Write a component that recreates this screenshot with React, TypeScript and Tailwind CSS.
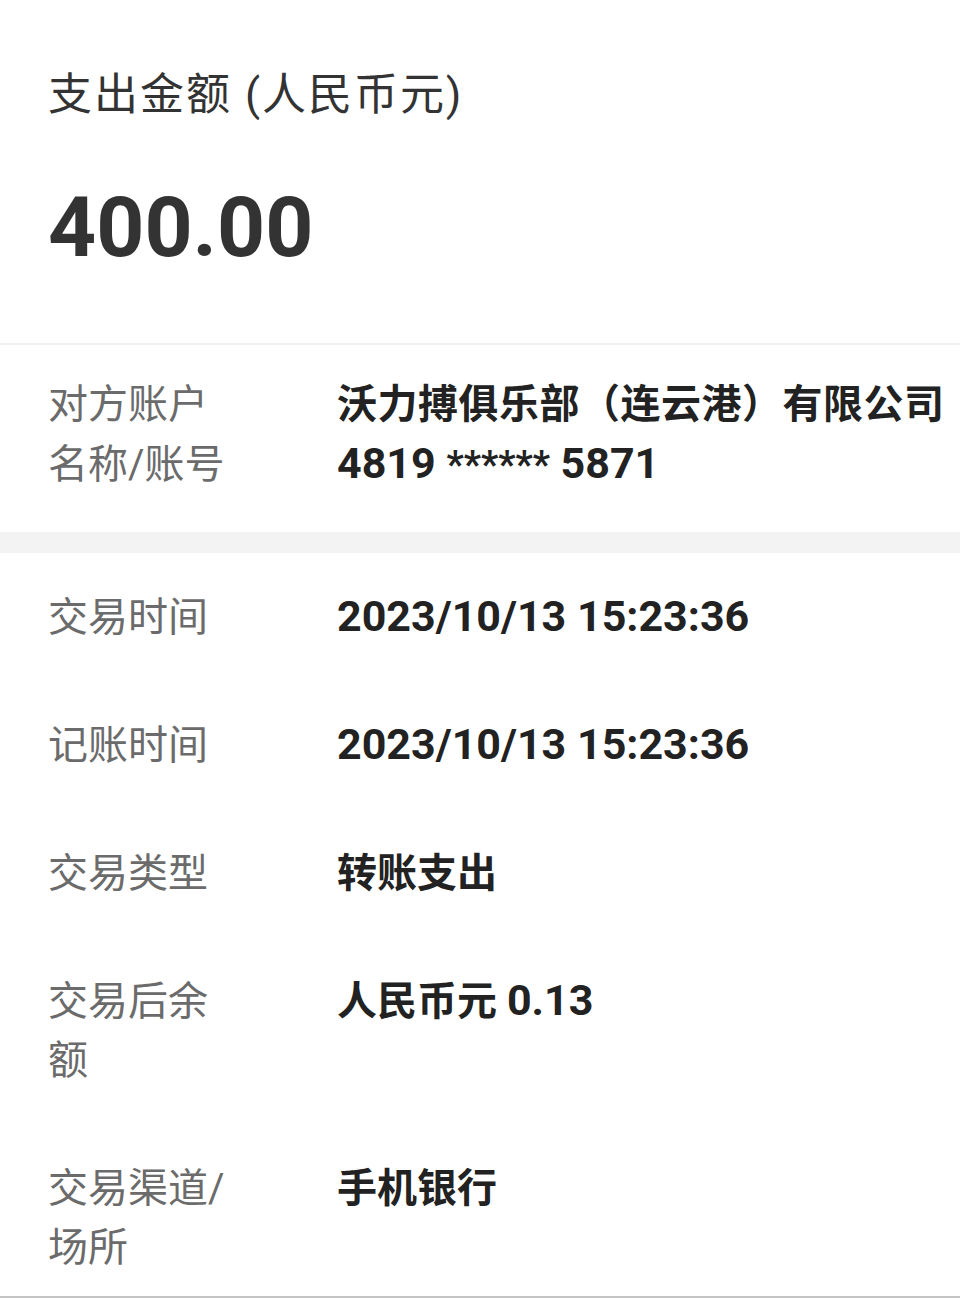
const FONT = { fontFamily: '"Roboto", "Noto Sans CJK SC", sans-serif' };

type Row = {
  label: string;
  value: React.ReactNode;
};

function Num({ children }: { children: React.ReactNode }) {
  return <span className="text-[43px] leading-none tracking-normal">{children}</span>;
}

const rows: Row[] = [
  { label: "交易时间", value: <Num>2023/10/13 15:23:36</Num> },
  { label: "记账时间", value: <Num>2023/10/13 15:23:36</Num> },
  { label: "交易类型", value: "转账支出" },
  {
    label: "交易后余额",
    value: (
      <>
        人民币元 <Num>0.13</Num>
      </>
    ),
  },
  { label: "交易渠道/场所", value: "手机银行" },
];

function DetailRow({ label, value }: Row) {
  return (
    <div className="flex pb-[34px] pl-[48px] pt-[35px] last:pb-[19px]">
      <div className="w-[289px] shrink-0">
        <div className="max-w-[190px] text-[40px] leading-[59px] text-[#6b6b6b]">
          {label}
        </div>
      </div>
      <div className="flex-1 whitespace-nowrap text-[40px] font-bold leading-[59px] text-[#222]">
        {value}
      </div>
    </div>
  );
}

export default function App() {
  return (
    <div className="w-[960px] bg-white" style={FONT}>
      {/* amount header */}
      <section className="px-[48px] pb-[73px] pt-[65px]">
        <div className="text-[44px] leading-[60px] tracking-[2px] text-[#333]">
          支出金额 (人民币元)
        </div>
        <div className="mt-[61px] text-[84px] font-bold leading-[84px] text-[#333]">
          400.00
        </div>
      </section>

      <div className="h-[2px] bg-[#f0f0f0]" />

      {/* counterparty */}
      <section className="flex pb-[37px] pl-[48px] pt-[30px]">
        <div className="w-[289px] shrink-0">
          <div className="max-w-[190px] text-[40px] leading-[60px] text-[#6b6b6b]">
            对方账户名称/账号
          </div>
        </div>
        <div className="flex-1 whitespace-nowrap text-[40px] font-bold leading-[60px] text-[#222]">
          <div className="tracking-[0.5px]">沃力搏俱乐部（连云港）有限公司</div>
          <div>
            <Num>
              4819 <span className="text-[38px]">******</span> 5871
            </Num>
          </div>
        </div>
      </section>

      <div className="h-[21px] bg-[#f3f3f3]" />

      {/* transaction details */}
      <section>
        {rows.map((r) => (
          <DetailRow key={r.label} label={r.label} value={r.value} />
        ))}
      </section>

      <div className="h-[2px] bg-[#c4c4c4]" />
    </div>
  );
}
